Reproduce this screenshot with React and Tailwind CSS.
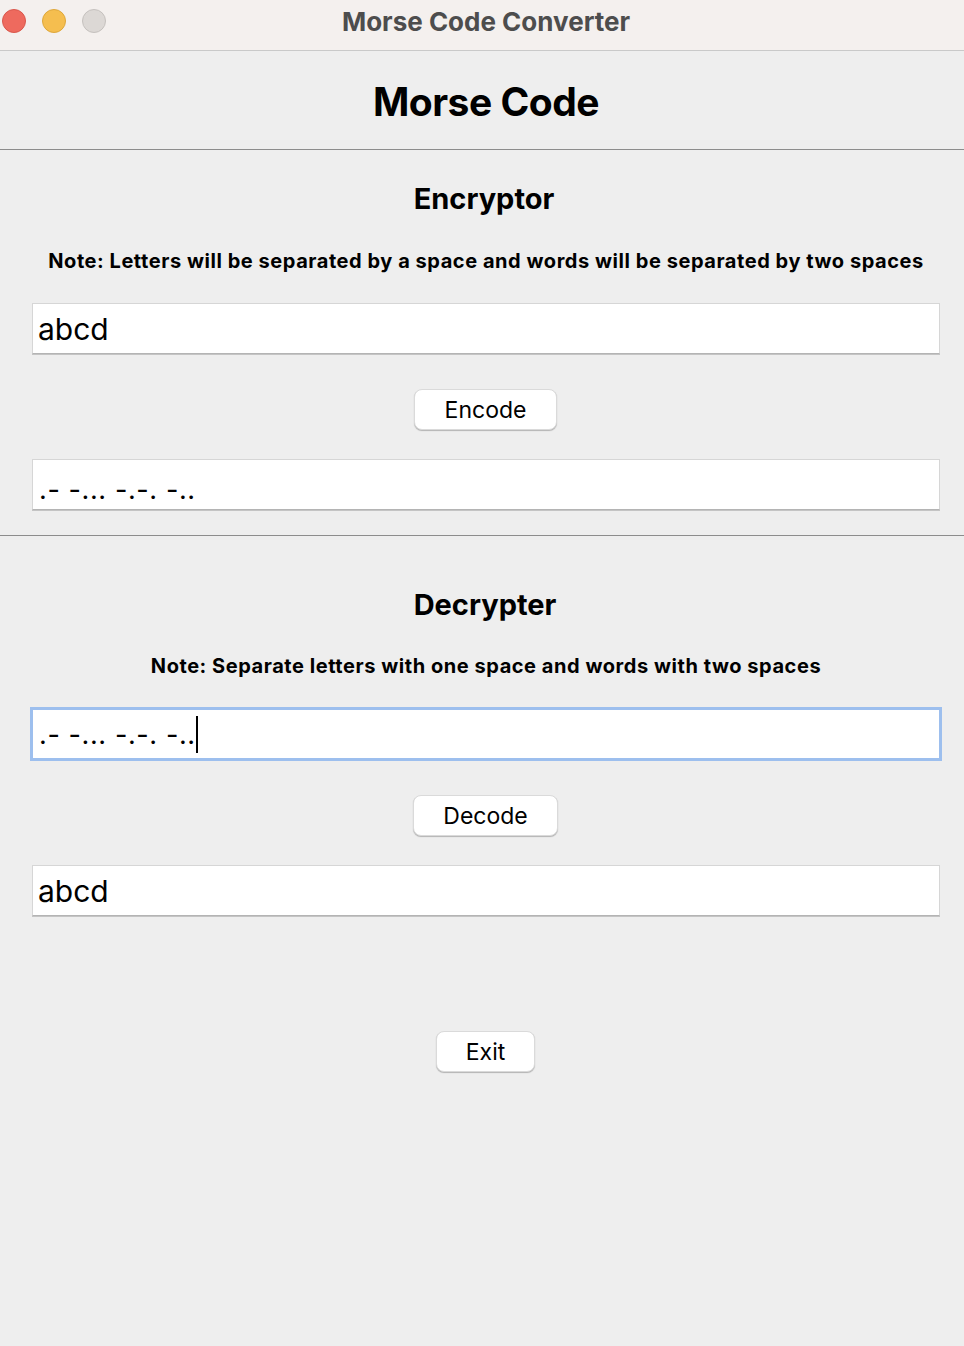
import React from 'react';

function Field({ value, focused, caret }) {
    if (focused) {
        return (
            <div className="ml-[30px] mr-[22px] h-[54px] border-[3px] border-[#9dbfee] bg-white flex items-center px-[6px]">
                <span className="text-[27px] leading-none text-black tracking-[0.6px]">{value}</span>
                {caret && <span className="w-[2px] h-[37px] bg-black" />}
            </div>
        );
    }
    return (
        <div className="ml-[32px] mr-[24px] h-[51px] bg-white border border-[#d6d6d6] border-b-[#b4b4b4] shadow-[0_1px_0_#c4c4c4] flex items-center px-[5px]">
            <span className="text-[30px] leading-none text-black">{value}</span>
        </div>
    );
}

function MorseField({ value }) {
    return (
        <div className="ml-[32px] mr-[24px] h-[51px] bg-white border border-[#d6d6d6] border-b-[#b4b4b4] shadow-[0_1px_0_#c4c4c4] flex items-end pb-[6px] px-[6px]">
            <span className="text-[27px] leading-none text-black tracking-[0.6px]">{value}</span>
        </div>
    );
}

function Button({ label, width }) {
    return (
        <div className="flex justify-center pl-[7px]">
            <button
                className={`${width} h-[41px] bg-white rounded-[8px] border border-[#dadada] shadow-[0_1px_1px_rgba(0,0,0,0.25)] text-[23px] text-black leading-none pt-[1px]`}
            >
                {label}
            </button>
        </div>
    );
}

export default function App() {
    const morse = '.- -... -.-. -..';
    return (
        <div className="w-[964px] h-[1346px] bg-[#eeeeee] flex flex-col" style={{ fontFamily: 'Inter, "Liberation Sans", sans-serif' }}>
            {/* Title bar */}
            <div className="h-[51px] bg-[#f4f0ee] border-b border-[#c9c9c9] flex items-center relative">
                <div className="flex gap-[16px] pl-[2px] pb-[8px]">
                    <span className="w-[24px] h-[24px] rounded-full bg-[#ee6a5e] border border-[#d9574c]" />
                    <span className="w-[24px] h-[24px] rounded-full bg-[#f5be4f] border border-[#dea73a]" />
                    <span className="w-[24px] h-[24px] rounded-full bg-[#dcd8d5] border border-[#c5c1be]" />
                </div>
                <div className="absolute inset-x-0 top-[2px] pl-[8px] text-center text-[26px] font-bold text-[#4d4d4d]">
                    Morse Code Converter
                </div>
            </div>

            {/* Heading */}
            <div className="h-[99px] border-b border-[#8c8c8c] flex items-center justify-center pt-[4px] pl-[8px]">
                <h1 className="text-[39px] font-bold text-black tracking-[-0.5px]">Morse Code</h1>
            </div>

            {/* Encryptor */}
            <div className="border-b border-[#8c8c8c] pb-[25px]">
                <h2 className="text-center pl-[4px] text-[29px] font-bold text-black mt-[29px] leading-[40px]">Encryptor</h2>
                <p className="text-center pl-[8px] text-[20px] font-bold text-black mt-[30px] leading-[24px] tracking-[0.55px]">
                    Note: Letters will be separated by a space and words will be separated by two spaces
                </p>
                <div className="mt-[30px]">
                    <Field value="abcd" />
                </div>
                <div className="mt-[35px]">
                    <Button label="Encode" width="w-[143px]" />
                </div>
                <div className="mt-[29px]">
                    <MorseField value={morse} />
                </div>
            </div>

            {/* Decrypter */}
            <div>
                <h2 className="text-center pl-[6px] text-[29px] font-bold text-black mt-[49px] leading-[40px]">Decrypter</h2>
                <p className="text-center pl-[8px] text-[20px] font-bold text-black mt-[29px] leading-[24px] tracking-[0.55px]">
                    Note: Separate letters with one space and words with two spaces
                </p>
                <div className="mt-[29px]">
                    <Field value={morse} focused caret />
                </div>
                <div className="mt-[34px]">
                    <Button label="Decode" width="w-[145px]" />
                </div>
                <div className="mt-[29px]">
                    <Field value="abcd" />
                </div>
                <div className="mt-[115px]">
                    <Button label="Exit" width="w-[99px]" />
                </div>
            </div>
        </div>
    );
}
